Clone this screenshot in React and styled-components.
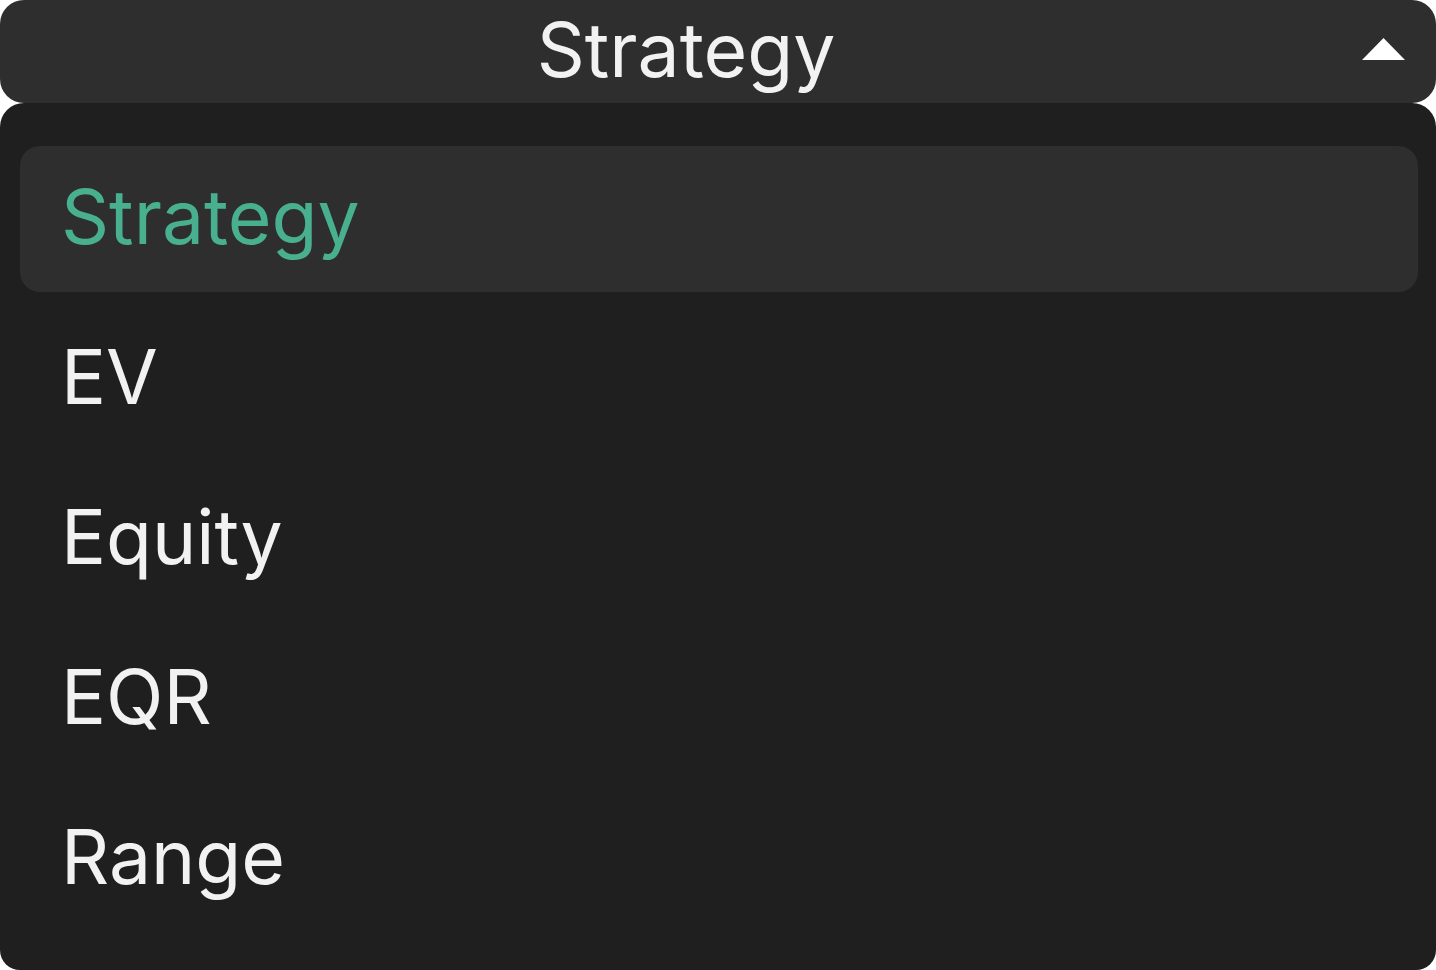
import React, { useState } from 'react';
import styled, { createGlobalStyle } from 'styled-components';

const GlobalStyle = createGlobalStyle`
  * {
    box-sizing: border-box;
  }
  body {
    margin: 0;
    background: #ffffff;
    font-family: Inter, 'Noto Sans', sans-serif;
  }
`;

const Wrapper = styled.div`
  width: 1436px;
  height: 970px;
  display: flex;
  flex-direction: column;
`;

const Header = styled.div`
  height: 103px;
  flex-shrink: 0;
  display: flex;
  align-items: center;
  padding: 0 31px 0 10px;
  background: #2e2e2e;
  border-radius: 24px;
  cursor: pointer;
`;

const HeaderTitle = styled.div`
  flex: 1;
  text-align: center;
  color: #f2f2f2;
  font-size: 75px;
  line-height: 1;
  margin-top: -4px;
`;

const Arrow = styled.svg`
  width: 43px;
  height: 22px;
  margin-top: -6px;
  fill: #ffffff;
`;

const Panel = styled.div`
  flex: 1;
  background: #1f1f1f;
  border-radius: 24px 24px 20px 20px;
  padding: 43px 18px 38px 20px;
  display: flex;
  flex-direction: column;
  gap: 14px;
`;

const Option = styled.div`
  height: 146px;
  display: flex;
  align-items: center;
  padding: 0 0 5px 41px;
  border-radius: 20px;
  background: ${(p) => (p.$active ? '#2e2e2e' : 'transparent')};
  color: ${(p) => (p.$active ? '#48b08e' : '#f2f2f2')};
  font-size: 75px;
  line-height: 1;
  cursor: pointer;
`;

const options = ['Strategy', 'EV', 'Equity', 'EQR', 'Range'];

const App = () => {
  const [selected, setSelected] = useState('Strategy');

  return (
    <>
      <GlobalStyle />
      <Wrapper>
        <Header>
          <HeaderTitle>{selected}</HeaderTitle>
          <Arrow viewBox="0 0 43 22">
            <path d="M21.5 0 L43 22 L0 22 Z" />
          </Arrow>
        </Header>
        <Panel>
          {options.map((o) => (
            <Option key={o} $active={o === selected} onClick={() => setSelected(o)}>
              {o}
            </Option>
          ))}
        </Panel>
      </Wrapper>
    </>
  );
};

export default App;
